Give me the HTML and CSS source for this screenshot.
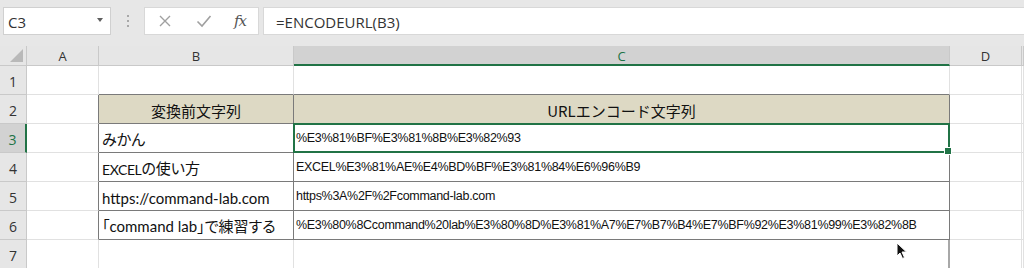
FILE: index.html
```html
<!DOCTYPE html>
<html lang="ja">
<head>
    <meta charset="UTF-8">
    <title>ENCODEURL</title>
    <link rel="stylesheet" href="styles.css">
</head>
<body>
    <div class="toolbar">
        <div class="name-box">
            <span>C3</span>
            <span class="drop"></span>
        </div>
        <div class="grip"><i></i><i></i><i></i></div>
        <div class="fn-box">
            <svg class="fn-icon" width="14" height="14" viewBox="0 0 14 14"><path d="M2 2 L12 12 M12 2 L2 12" stroke="#a0a0a0" stroke-width="1.4" fill="none"/></svg>
            <svg class="fn-icon" width="16" height="14" viewBox="0 0 16 14"><path d="M1.5 7.5 L6 12 L14.5 2" stroke="#a0a0a0" stroke-width="1.6" fill="none"/></svg>
            <span class="fx">fx</span>
        </div>
        <div class="formula">=ENCODEURL(B3)</div>
    </div>

    <div class="sheet">
        <!-- column headers -->
        <div class="corner"></div>
        <div class="col-head">A</div>
        <div class="col-head">B</div>
        <div class="col-head sel">C</div>
        <div class="col-head">D</div>
        <div class="col-head"></div>

        <!-- row 1 -->
        <div class="row-head">1</div>
        <div class="cell"></div>
        <div class="cell top-edge"></div>
        <div class="cell top-edge"></div>
        <div class="cell"></div>
        <div class="cell"></div>

        <!-- row 2 -->
        <div class="row-head">2</div>
        <div class="cell left-edge"></div>
        <div class="cell tbl th">変換前文字列</div>
        <div class="cell tbl th">URLエンコード文字列</div>
        <div class="cell"></div>
        <div class="cell"></div>

        <!-- row 3 -->
        <div class="row-head sel">3</div>
        <div class="cell left-edge"></div>
        <div class="cell tbl src">みかん</div>
        <div class="cell tbl enc active">%E3%81%BF%E3%81%8B%E3%82%93</div>
        <div class="cell"></div>
        <div class="cell"></div>

        <!-- row 4 -->
        <div class="row-head">4</div>
        <div class="cell left-edge"></div>
        <div class="cell tbl src"><span class="narrow">EXCEL</span>の使い方</div>
        <div class="cell tbl enc">EXCEL%E3%81%AE%E4%BD%BF%E3%81%84%E6%96%B9</div>
        <div class="cell"></div>
        <div class="cell"></div>

        <!-- row 5 -->
        <div class="row-head">5</div>
        <div class="cell left-edge"></div>
        <div class="cell tbl src">https://command-lab.com</div>
        <div class="cell tbl enc">https%3A%2F%2Fcommand-lab.com</div>
        <div class="cell"></div>
        <div class="cell"></div>

        <!-- row 6 -->
        <div class="row-head">6</div>
        <div class="cell left-edge"></div>
        <div class="cell tbl src">「command lab」で練習する</div>
        <div class="cell tbl enc">%E3%80%8Ccommand%20lab%E3%80%8D%E3%81%A7%E7%B7%B4%E7%BF%92%E3%81%99%E3%82%8B</div>
        <div class="cell"></div>
        <div class="cell"></div>

        <!-- row 7 -->
        <div class="row-head">7</div>
        <div class="cell"></div>
        <div class="cell"></div>
        <div class="cell page-break"></div>
        <div class="cell"></div>
        <div class="cell"></div>

        <svg class="pointer" width="12" height="18" viewBox="0 0 12 18"><path d="M1 1 L1 14 L4 11 L6.5 16.5 L8.5 15.5 L6 10 L10.5 10 Z" fill="#111" stroke="#fff" stroke-width="1"/></svg>
    </div>
</body>
</html>
```

FILE: styles.css
```css
:root {
    --green: #217346;
    --grid: #e1e1e1;
    --head-line: #c9c9c9;
    --table-line: #7a7a7a;
    --head-fill: #ddd9c4;
}

* {
    margin: 0;
    padding: 0;
    box-sizing: border-box;
}

body {
    width: 1024px;
    height: 268px;
    overflow: hidden;
    background: #fff;
    font-family: "Liberation Sans", Arial, sans-serif;
    color: #222;
}

/* formula bar */
.toolbar {
    height: 46px;
    background: #e7e7e7;
    display: flex;
    align-items: flex-start;
    padding-top: 7px;
    padding-left: 3px;
}

.name-box {
    width: 108px;
    height: 28px;
    background: #fff;
    border: 1px solid #d0d0d0;
    display: flex;
    align-items: center;
    justify-content: space-between;
    padding: 2px 7px 0 4px;
    font-family: "Open Sans", "Noto Sans", sans-serif;
    font-size: 15px;
    color: #333;
}

.drop {
    width: 0;
    height: 0;
    border-left: 3.5px solid transparent;
    border-right: 3.5px solid transparent;
    border-top: 4px solid #5f5f5f;
    margin-top: -4px;
}

.grip {
    width: 33px;
    height: 28px;
    display: flex;
    flex-direction: column;
    align-items: center;
    justify-content: center;
    gap: 3px;
}

.grip i {
    width: 2px;
    height: 2px;
    background: #a8a8a8;
}

.fn-box {
    width: 115px;
    height: 28px;
    background: #fff;
    border: 1px solid #d8d8d8;
    display: flex;
    align-items: center;
    padding-left: 13px;
    gap: 24px;
}

.fx {
    font-family: "DejaVu Serif", "Liberation Serif", serif;
    font-style: italic;
    font-size: 15px;
    color: #555;
    margin-left: -2px;
    letter-spacing: -1px;
}

.formula {
    flex: 1;
    height: 28px;
    margin-left: 4px;
    background: #fff;
    border: 1px solid #d8d8d8;
    border-right: none;
    display: flex;
    align-items: center;
    padding: 1px 0 0 12px;
    font-family: "Open Sans", "Noto Sans", sans-serif;
    font-size: 15px;
    color: #333;
}

/* sheet grid */
.sheet {
    position: relative;
    display: grid;
    grid-template-columns: 27px 72px 195px 656px 72px 1fr;
    grid-template-rows: 20px repeat(7, 29px);
}

.corner {
    background: #e6e6e6;
    border-right: 1px solid var(--head-line);
    border-bottom: 1px solid var(--head-line);
    position: relative;
}

.corner::after {
    content: "";
    position: absolute;
    right: 3px;
    bottom: 3px;
    border-left: 13px solid transparent;
    border-bottom: 13px solid #b9b9b9;
}

.col-head,
.row-head {
    background: #e6e6e6;
    border-right: 1px solid var(--head-line);
    border-bottom: 1px solid var(--head-line);
    font-family: "Open Sans", "Noto Sans", sans-serif;
    font-size: 13px;
    color: #333;
    display: flex;
    justify-content: center;
}

.col-head {
    align-items: center;
    padding-top: 1px;
}

.row-head {
    align-items: flex-end;
    padding-bottom: 3px;
    font-size: 14px;
}

.col-head.sel {
    background: #d2d2d2;
    color: var(--green);
    border-bottom: 2px solid var(--green);
}

.row-head.sel {
    background: #d2d2d2;
    color: var(--green);
    border-right: 2px solid var(--green);
}

.cell {
    border-right: 1px solid var(--grid);
    border-bottom: 1px solid var(--grid);
    display: flex;
    align-items: flex-end;
    white-space: nowrap;
    overflow: visible;
}

.top-edge {
    border-bottom-color: var(--table-line);
}

.left-edge {
    border-right-color: var(--table-line);
}

.tbl {
    border-right-color: var(--table-line);
    border-bottom-color: var(--table-line);
}

.th {
    background: var(--head-fill);
    justify-content: center;
    font-family: "Noto Sans CJK JP", sans-serif;
    font-size: 15px;
    padding-bottom: 2px;
    color: #111;
}

.src {
    font-family: "Lato", "Noto Sans CJK JP", sans-serif;
    font-feature-settings: "palt";
    font-size: 15px;
    padding: 0 0 3px 3px;
    color: #111;
}

.narrow {
    font-size: 14px;
    letter-spacing: -0.4px;
}

.enc {
    font-family: "Liberation Sans", Arial, sans-serif;
    font-size: 12.5px;
    letter-spacing: -0.3px;
    padding: 0 0 7px 2px;
    color: #111;
}

.active {
    position: relative;
}

.active::before {
    content: "";
    position: absolute;
    inset: -1px -1px -1px -1px;
    border: 2px solid var(--green);
}

.active::after {
    content: "";
    position: absolute;
    right: -3px;
    bottom: -3px;
    width: 6px;
    height: 6px;
    background: var(--green);
    border: 1px solid #fff;
}

.page-break {
    border-right: 2px solid #a8a8a8;
}

.pointer {
    position: absolute;
    left: 896px;
    top: 196px;
}
```
